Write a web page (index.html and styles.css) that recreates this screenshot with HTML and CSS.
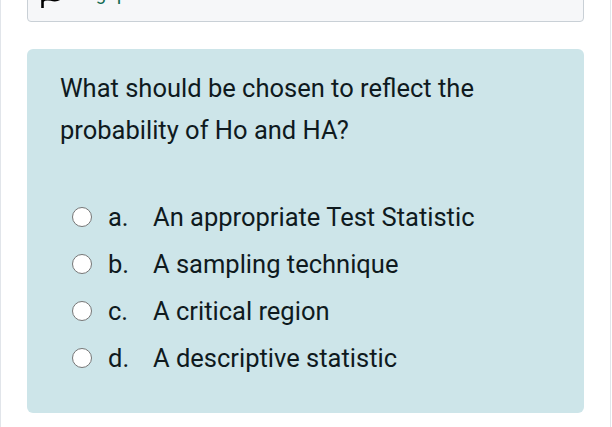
FILE: index.html
```html
<!DOCTYPE html>
<html>
<head>
<meta charset="utf-8">
<link rel="stylesheet" href="styles.css">
</head>
<body>
<div class="card">
  <div class="info">
    <svg class="flag" width="22" height="26" viewBox="0 0 22 26">
      <path d="M2.5 2 V26" stroke="#000" stroke-width="2.6" fill="none"/>
      <path d="M2.5 4 C7 0 12 8 19.5 4 V17 C13 21 8 14 2.5 19" stroke="#000" stroke-width="2.4" fill="none"/>
    </svg>
    <span class="flaglink">Flag question</span>
  </div>
  <div class="formulation">
    <div class="qtext">What should be chosen to reflect the probability of Ho and HA?</div>
    <div class="answers">
      <div class="opt"><span class="radio"></span><span class="letter">a.</span><span class="atext">An appropriate Test Statistic</span></div>
      <div class="opt"><span class="radio"></span><span class="letter">b.</span><span class="atext">A sampling technique</span></div>
      <div class="opt"><span class="radio"></span><span class="letter">c.</span><span class="atext">A critical region</span></div>
      <div class="opt"><span class="radio"></span><span class="letter">d.</span><span class="atext">A descriptive statistic</span></div>
    </div>
  </div>
</div>
</body>
</html>
```

FILE: styles.css
```css
html, body {
  margin: 0;
  padding: 0;
  background: #ffffff;
  overflow: hidden;
}
body {
  font-family: Roboto, "Liberation Sans", sans-serif;
  color: #0f1a1e;
}
.card {
  width: 611px;
  box-sizing: border-box;
  height: 460px;
  margin-top: -30px;
  border-left: 1px solid #e1e5ea;
  border-right: 1px solid #e1e5ea;
  padding: 0 26px;
}
.info {
  display: flex;
  align-items: flex-start;
  box-sizing: border-box;
  height: 52px;
  padding: 11px 12px 0 12px;
  background: #f6f7f9;
  border: 1px solid #c9d0d6;
  border-radius: 4px;
  font-size: 18.5px;
  line-height: 24px;
}
.flag {
  flex: none;
  margin-top: -0.5px;
  margin-right: 9px;
}
.flaglink {
  color: #146b52;
}
.formulation {
  margin-top: 27px;
  background: #cde5e9;
  border-radius: 6px;
  padding: 18px 20px 32px 33px;
}
.qtext {
  font-size: 25.5px;
  line-height: 42px;
  width: 470px;
}
.answers {
  margin-top: 42px;
}
.opt {
  display: flex;
  align-items: center;
  height: 47px;
  font-size: 25.5px;
}
.radio {
  width: 20px;
  height: 20px;
  box-sizing: border-box;
  border: 1.6px solid #767676;
  border-radius: 50%;
  background: #ffffff;
  margin-left: 12px;
  margin-right: 16px;
}
.letter {
  width: 45px;
}
```
